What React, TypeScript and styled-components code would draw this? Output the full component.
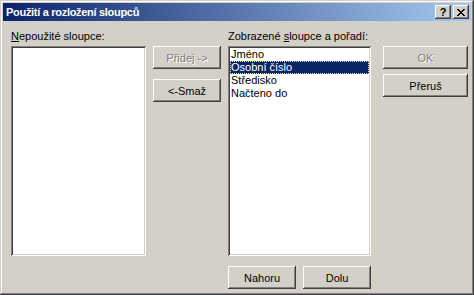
import styled, { createGlobalStyle } from "styled-components";

const GlobalStyle = createGlobalStyle`
  * { box-sizing: border-box; }
  body {
    margin: 0;
    background: #d4d0c8;
    font-family: "Liberation Sans", Arial, sans-serif;
    font-size: 11px;
  }
`;

const Window = styled.div`
  width: 474px;
  height: 295px;
  padding: 3px;
  background: #d4d0c8;
  box-shadow: inset -1px -1px #404040, inset 1px 1px #d4d0c8,
    inset -2px -2px #808080, inset 2px 2px #ffffff;
  display: flex;
  flex-direction: column;
`;

const TitleBar = styled.div`
  height: 18px;
  display: flex;
  align-items: center;
  padding: 0 2px 0 3px;
  background: linear-gradient(to right, #0a246a, #a6caf0);
`;

const Title = styled.div`
  flex: 1;
  color: #ffffff;
  font-weight: bold;
  font-size: 11px;
  letter-spacing: -0.3px;
  white-space: nowrap;
`;

const CaptionButton = styled.div<{ $gap?: number }>`
  width: 16px;
  height: 14px;
  margin-left: ${(p) => p.$gap ?? 0}px;
  background: #d4d0c8;
  box-shadow: inset -1px -1px #404040, inset 1px 1px #ffffff,
    inset -2px -2px #808080;
  display: flex;
  align-items: center;
  justify-content: center;
  font-weight: bold;
  font-size: 11px;
  color: #000;
  line-height: 14px;
`;

const Content = styled.div`
  display: flex;
  gap: 7px;
  padding: 9px 0 0 8px;
`;

const Column = styled.div<{ $width: number; $top?: number; $left?: number }>`
  width: ${(p) => p.$width}px;
  padding-top: ${(p) => p.$top ?? 0}px;
  margin-left: ${(p) => p.$left ?? 0}px;
  display: flex;
  flex-direction: column;
`;

const Label = styled.div`
  height: 13px;
  line-height: 13px;
  margin-bottom: 3px;
  color: #000;
  white-space: nowrap;
  u { text-decoration: underline; }
`;

const ListBox = styled.div`
  height: 210px;
  background: #ffffff;
  padding: 2px;
  box-shadow: inset 1px 1px #808080, inset -1px -1px #ffffff,
    inset 2px 2px #404040, inset -2px -2px #d4d0c8;
`;

const Item = styled.div<{ $selected?: boolean }>`
  height: 13px;
  line-height: 13px;
  padding-left: 1px;
  color: ${(p) => (p.$selected ? "#ffffff" : "#000000")};
  background: ${(p) => (p.$selected ? "#0a246a" : "transparent")};
  outline: ${(p) => (p.$selected ? "1px dotted #e8e4a0" : "none")};
  outline-offset: -1px;
  white-space: nowrap;
`;

const Button = styled.div<{ $disabled?: boolean; $gap?: number }>`
  height: 23px;
  margin-top: ${(p) => p.$gap ?? 0}px;
  background: #d4d0c8;
  box-shadow: inset -1px -1px #404040, inset 1px 1px #ffffff,
    inset -2px -2px #808080;
  display: flex;
  align-items: center;
  justify-content: center;
  color: ${(p) => (p.$disabled ? "#808080" : "#000000")};
  text-shadow: ${(p) => (p.$disabled ? "1px 1px 0 #ffffff" : "none")};
  white-space: nowrap;
`;

const ButtonRow = styled.div`
  display: flex;
  gap: 7px;
  margin-top: 10px;
  & > * { flex: 1; }
`;

const shown = ["Jméno", "Osobní číslo", "Středisko", "Načteno do"];

export default function App() {
  return (
    <>
      <GlobalStyle />
      <Window>
        <TitleBar>
          <Title>Použití a rozložení sloupců</Title>
          <CaptionButton>?</CaptionButton>
          <CaptionButton $gap={2}>
            <svg width="8" height="7" viewBox="0 0 8 7" shapeRendering="crispEdges">
              <path
                d="M0 0h2v1H0zM6 0h2v1H6zM1 1h2v1H1zM5 1h2v1H5zM2 2h4v1H2zM3 3h2v1H3zM2 4h4v1H2zM1 5h2v1H1zM5 5h2v1H5zM0 6h2v1H0zM6 6h2v1H6z"
                fill="#000"
              />
            </svg>
          </CaptionButton>
        </TitleBar>
        <Content>
          <Column $width={135}>
            <Label>
              <u>N</u>epoužité sloupce:
            </Label>
            <ListBox />
          </Column>
          <Column $width={68} $top={16}>
            <Button $disabled>Přidej -&gt;</Button>
            <Button $gap={10}>&lt;-Smaž</Button>
          </Column>
          <Column $width={143}>
            <Label>
              Zobrazené <u>s</u>loupce a pořadí:
            </Label>
            <ListBox>
              {shown.map((name, i) => (
                <Item key={name} $selected={i === 1}>
                  {name}
                </Item>
              ))}
            </ListBox>
            <ButtonRow>
              <Button>Nahoru</Button>
              <Button>Dolu</Button>
            </ButtonRow>
          </Column>
          <Column $width={85} $top={16} $left={5}>
            <Button $disabled>OK</Button>
            <Button $gap={5}>Přeruš</Button>
          </Column>
        </Content>
      </Window>
    </>
  );
}
